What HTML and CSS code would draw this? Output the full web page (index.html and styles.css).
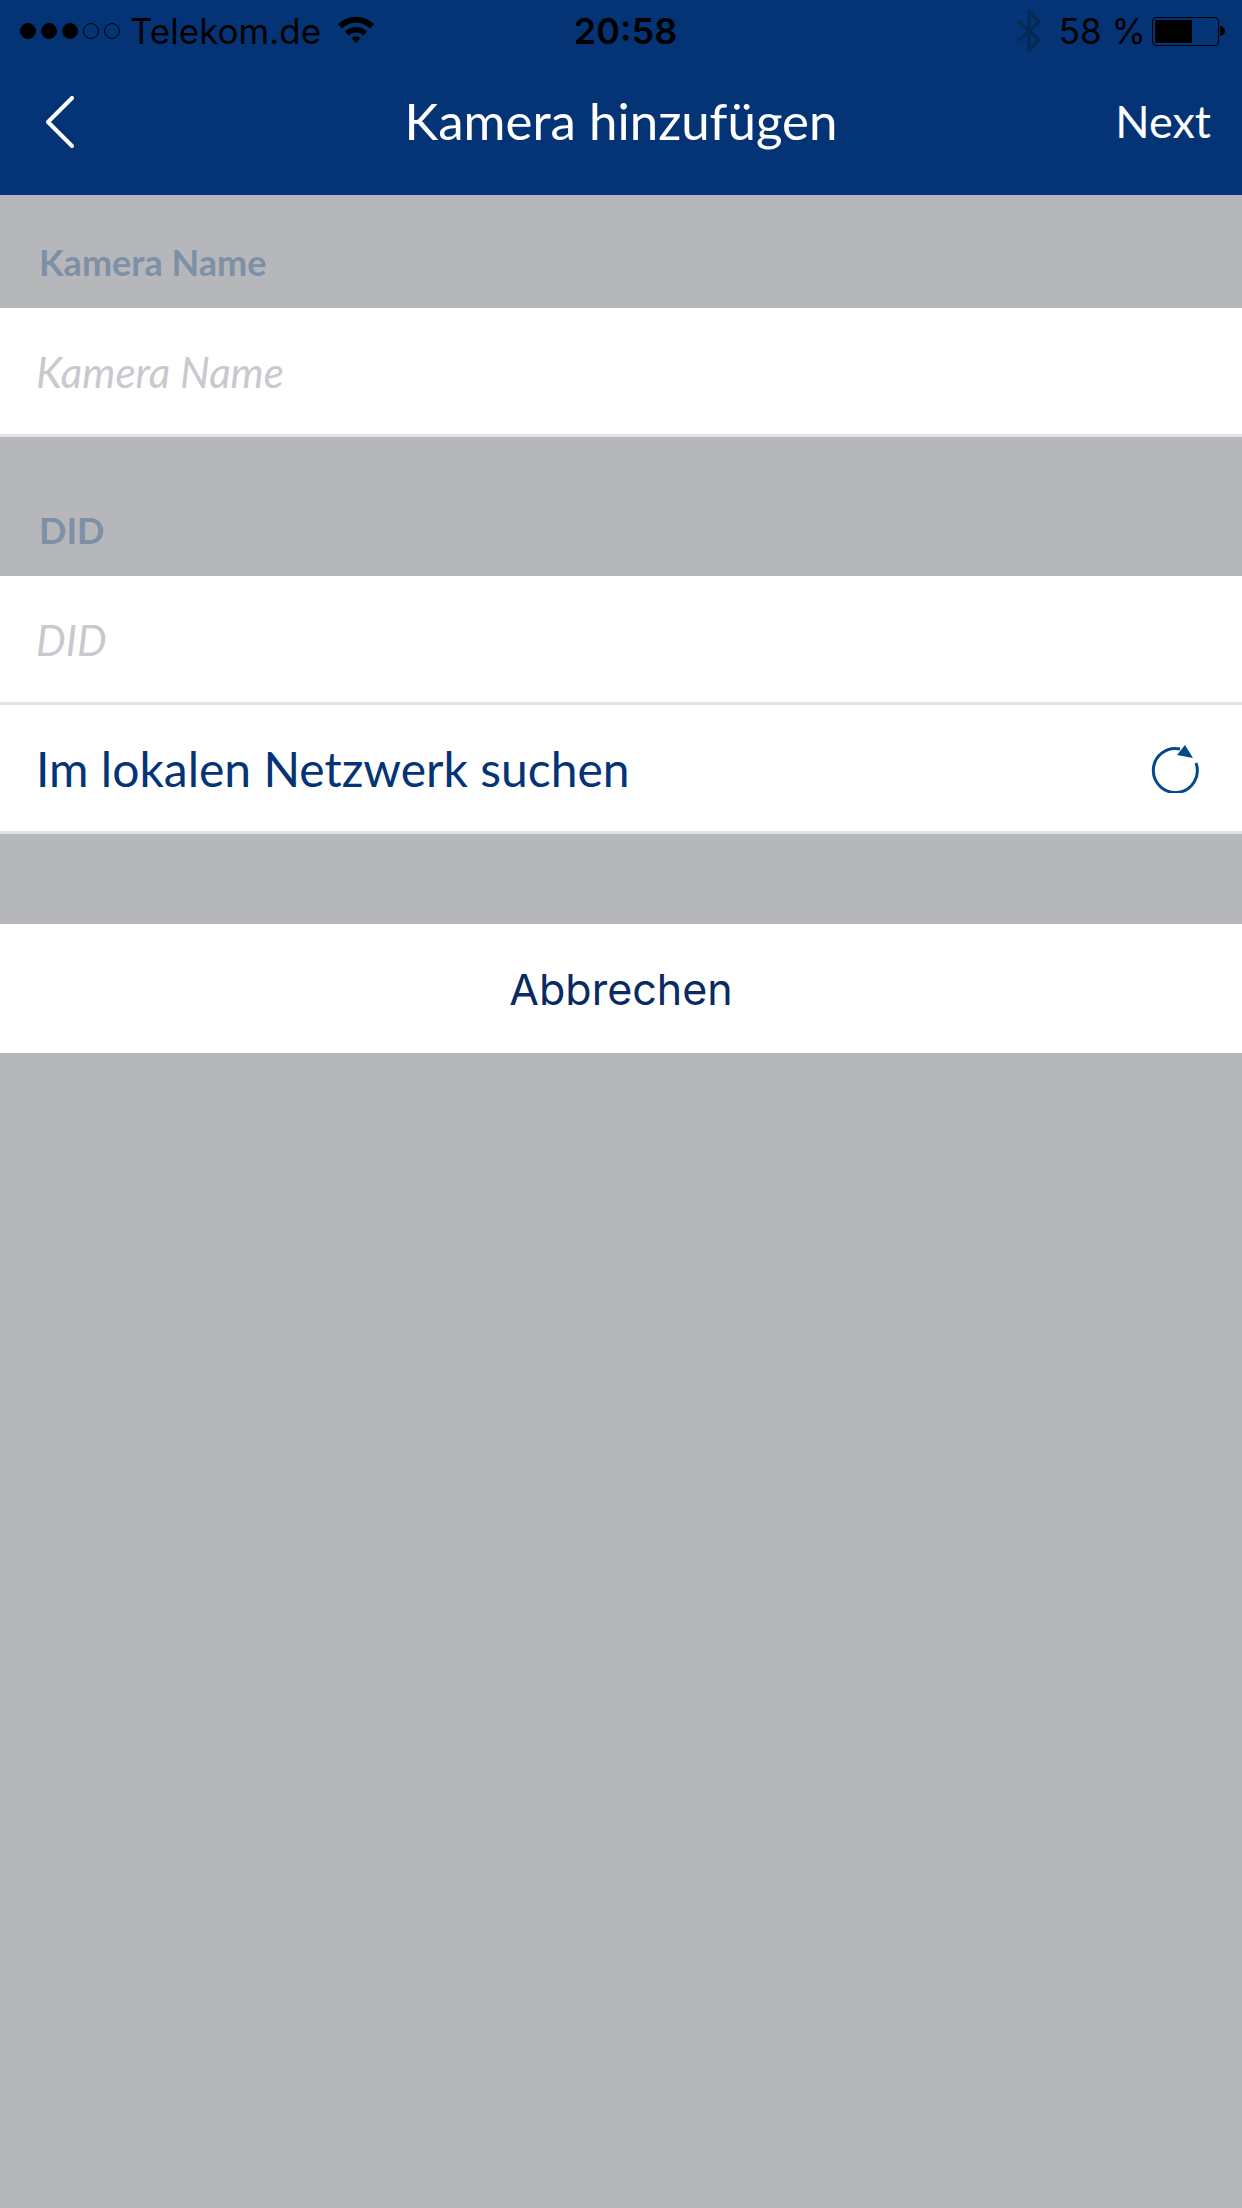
FILE: index.html
```html
<!DOCTYPE html>
<html lang="de">

<head>
    <meta charset="UTF-8">
    <title>Kamera hinzufügen</title>
    <link rel="stylesheet" href="styles.css">
</head>

<body>
    <div class="header">
        <div class="status_bar">
            <div class="status_left">
                <span class="dots">
                    <i class="dot full"></i><i class="dot full"></i><i class="dot full"></i><i class="dot"></i><i class="dot"></i>
                </span>
                <span class="carrier">Telekom.de</span>
                <svg class="wifi" width="38" height="28" viewBox="0 0 38 28">
                    <path d="M1 9 A26 26 0 0 1 37 9 L33 13.5 A20 20 0 0 0 5 13.5 Z" fill="#000"/>
                    <path d="M8 16.5 A16 16 0 0 1 30 16.5 L26.5 20.5 A11 11 0 0 0 11.500 20.500 Z" fill="#000"/>
                    <path d="M14.500 23 A6.500 6.500 0 0 1 23.500 23 L19 28 Z" fill="#000"/>
                </svg>
            </div>
            <div class="clock">20:58</div>
            <div class="status_right">
                <svg class="bluetooth" width="24" height="42" viewBox="0 0 24 42">
                    <path d="M1 11 L22 30 L12 40 L12 2 L22 12 L1 31" fill="none" stroke="#05294f" stroke-width="3"/>
                </svg>
                <span class="percent">58 %</span>
                <span class="battery"><span class="battery_level"></span></span>
                <span class="battery_tip"></span>
            </div>
        </div>
        <div class="nav_bar">
            <svg class="back" width="30" height="52" viewBox="0 0 30 52">
                <path d="M27 2 L3 26 L27 50" fill="none" stroke="#fff" stroke-width="4" stroke-linecap="round" stroke-linejoin="round"/>
            </svg>
            <div class="nav_title">Kamera hinzufügen</div>
            <div class="nav_next">Next</div>
        </div>
    </div>

    <div class="section_label first">Kamera Name</div>
    <div class="row input_row">Kamera Name</div>

    <div class="section_label">DID</div>
    <div class="row input_row">DID</div>
    <div class="row search_row">
        <span>Im lokalen Netzwerk suchen</span>
        <svg class="refresh" width="50" height="50" viewBox="0 0 50 50">
            <path d="M47 20 A22 22 0 1 1 31 6" fill="none" stroke="#044a88" stroke-width="3"/>
            <path d="M36 2 L44 15 L28 12 Z" fill="#044a88"/>
        </svg>
    </div>

    <div class="cancel">Abbrechen</div>
</body>

</html>
```
FILE: styles.css
```css
html, body {
    margin: 0;
    padding: 0;
}

body {
    width: 1242px;
    height: 2208px;
    overflow: hidden;
    background: #b6b7bb;
    font-family: Lato, "Liberation Sans", sans-serif;
}

.header {
    height: 195px;
    background: #043476;
}

.status_bar {
    height: 62px;
    padding: 0 17px 0 20px;
    display: flex;
    align-items: center;
    justify-content: space-between;
    font-family: Inter, "Liberation Sans", sans-serif;
    font-size: 35px;
    color: #000;
}

.status_left, .status_right {
    width: 500px;
    display: flex;
    align-items: center;
}

.status_right {
    justify-content: flex-end;
}

.dots {
    display: flex;
    gap: 5px;
    margin-right: 10px;
}

.dot {
    box-sizing: border-box;
    width: 16px;
    height: 16px;
    border: 1px solid #000;
    border-radius: 50%;
}

.dot.full {
    background: #000;
}

.carrier {
    margin-right: 16px;
}

.wifi {
    margin-bottom: 4px;
}

.clock {
    margin-left: 6px;
    font-size: 36px;
    font-weight: 600;
}

.bluetooth {
    margin-right: 18px;
}

.percent {
    margin-right: 6px;
}

.battery {
    box-sizing: border-box;
    width: 67px;
    height: 29px;
    border: 1px solid #000;
    border-radius: 4px;
    padding: 2px;
    display: flex;
}

.battery_level {
    width: 37px;
    background: #000;
}

.battery_tip {
    width: 5px;
    height: 10px;
    margin-left: 1px;
    background: #000;
    border-radius: 0 5px 5px 0;
}

.nav_bar {
    height: 133px;
    display: flex;
    align-items: center;
    justify-content: center;
    position: relative;
    color: #fff;
}

.back {
    position: absolute;
    left: 45px;
    top: 34px;
}

.nav_title {
    font-size: 51px;
    margin-top: -16px;
}

.nav_next {
    position: absolute;
    right: 31px;
    top: 32px;
    font-size: 45px;
}

.section_label {
    height: 65px;
    margin-top: 74px;
    padding-left: 39px;
    font-size: 36px;
    font-weight: 700;
    color: #7d90a5;
    line-height: 39px;
}

.section_label.first {
    margin-top: 48px;
}

.row {
    height: 126px;
    padding: 0 36px;
    display: flex;
    align-items: center;
    justify-content: space-between;
    background: #fff;
    border-bottom: 3px solid #e1e2e7;
}

.input_row {
    font-size: 42px;
    font-style: italic;
    color: #c8c9ce;
    line-height: 52px;
    padding-top: 2px;
    height: 124px;
}

.search_row {
    font-size: 48px;
    color: #043476;
}

.refresh {
    margin-right: 7px;
}

.cancel {
    height: 129px;
    margin-top: 90px;
    display: flex;
    align-items: center;
    justify-content: center;
    background: #fff;
    font-family: Inter, "Liberation Sans", sans-serif;
    font-size: 43px;
    color: #0a2a63;
}
```
